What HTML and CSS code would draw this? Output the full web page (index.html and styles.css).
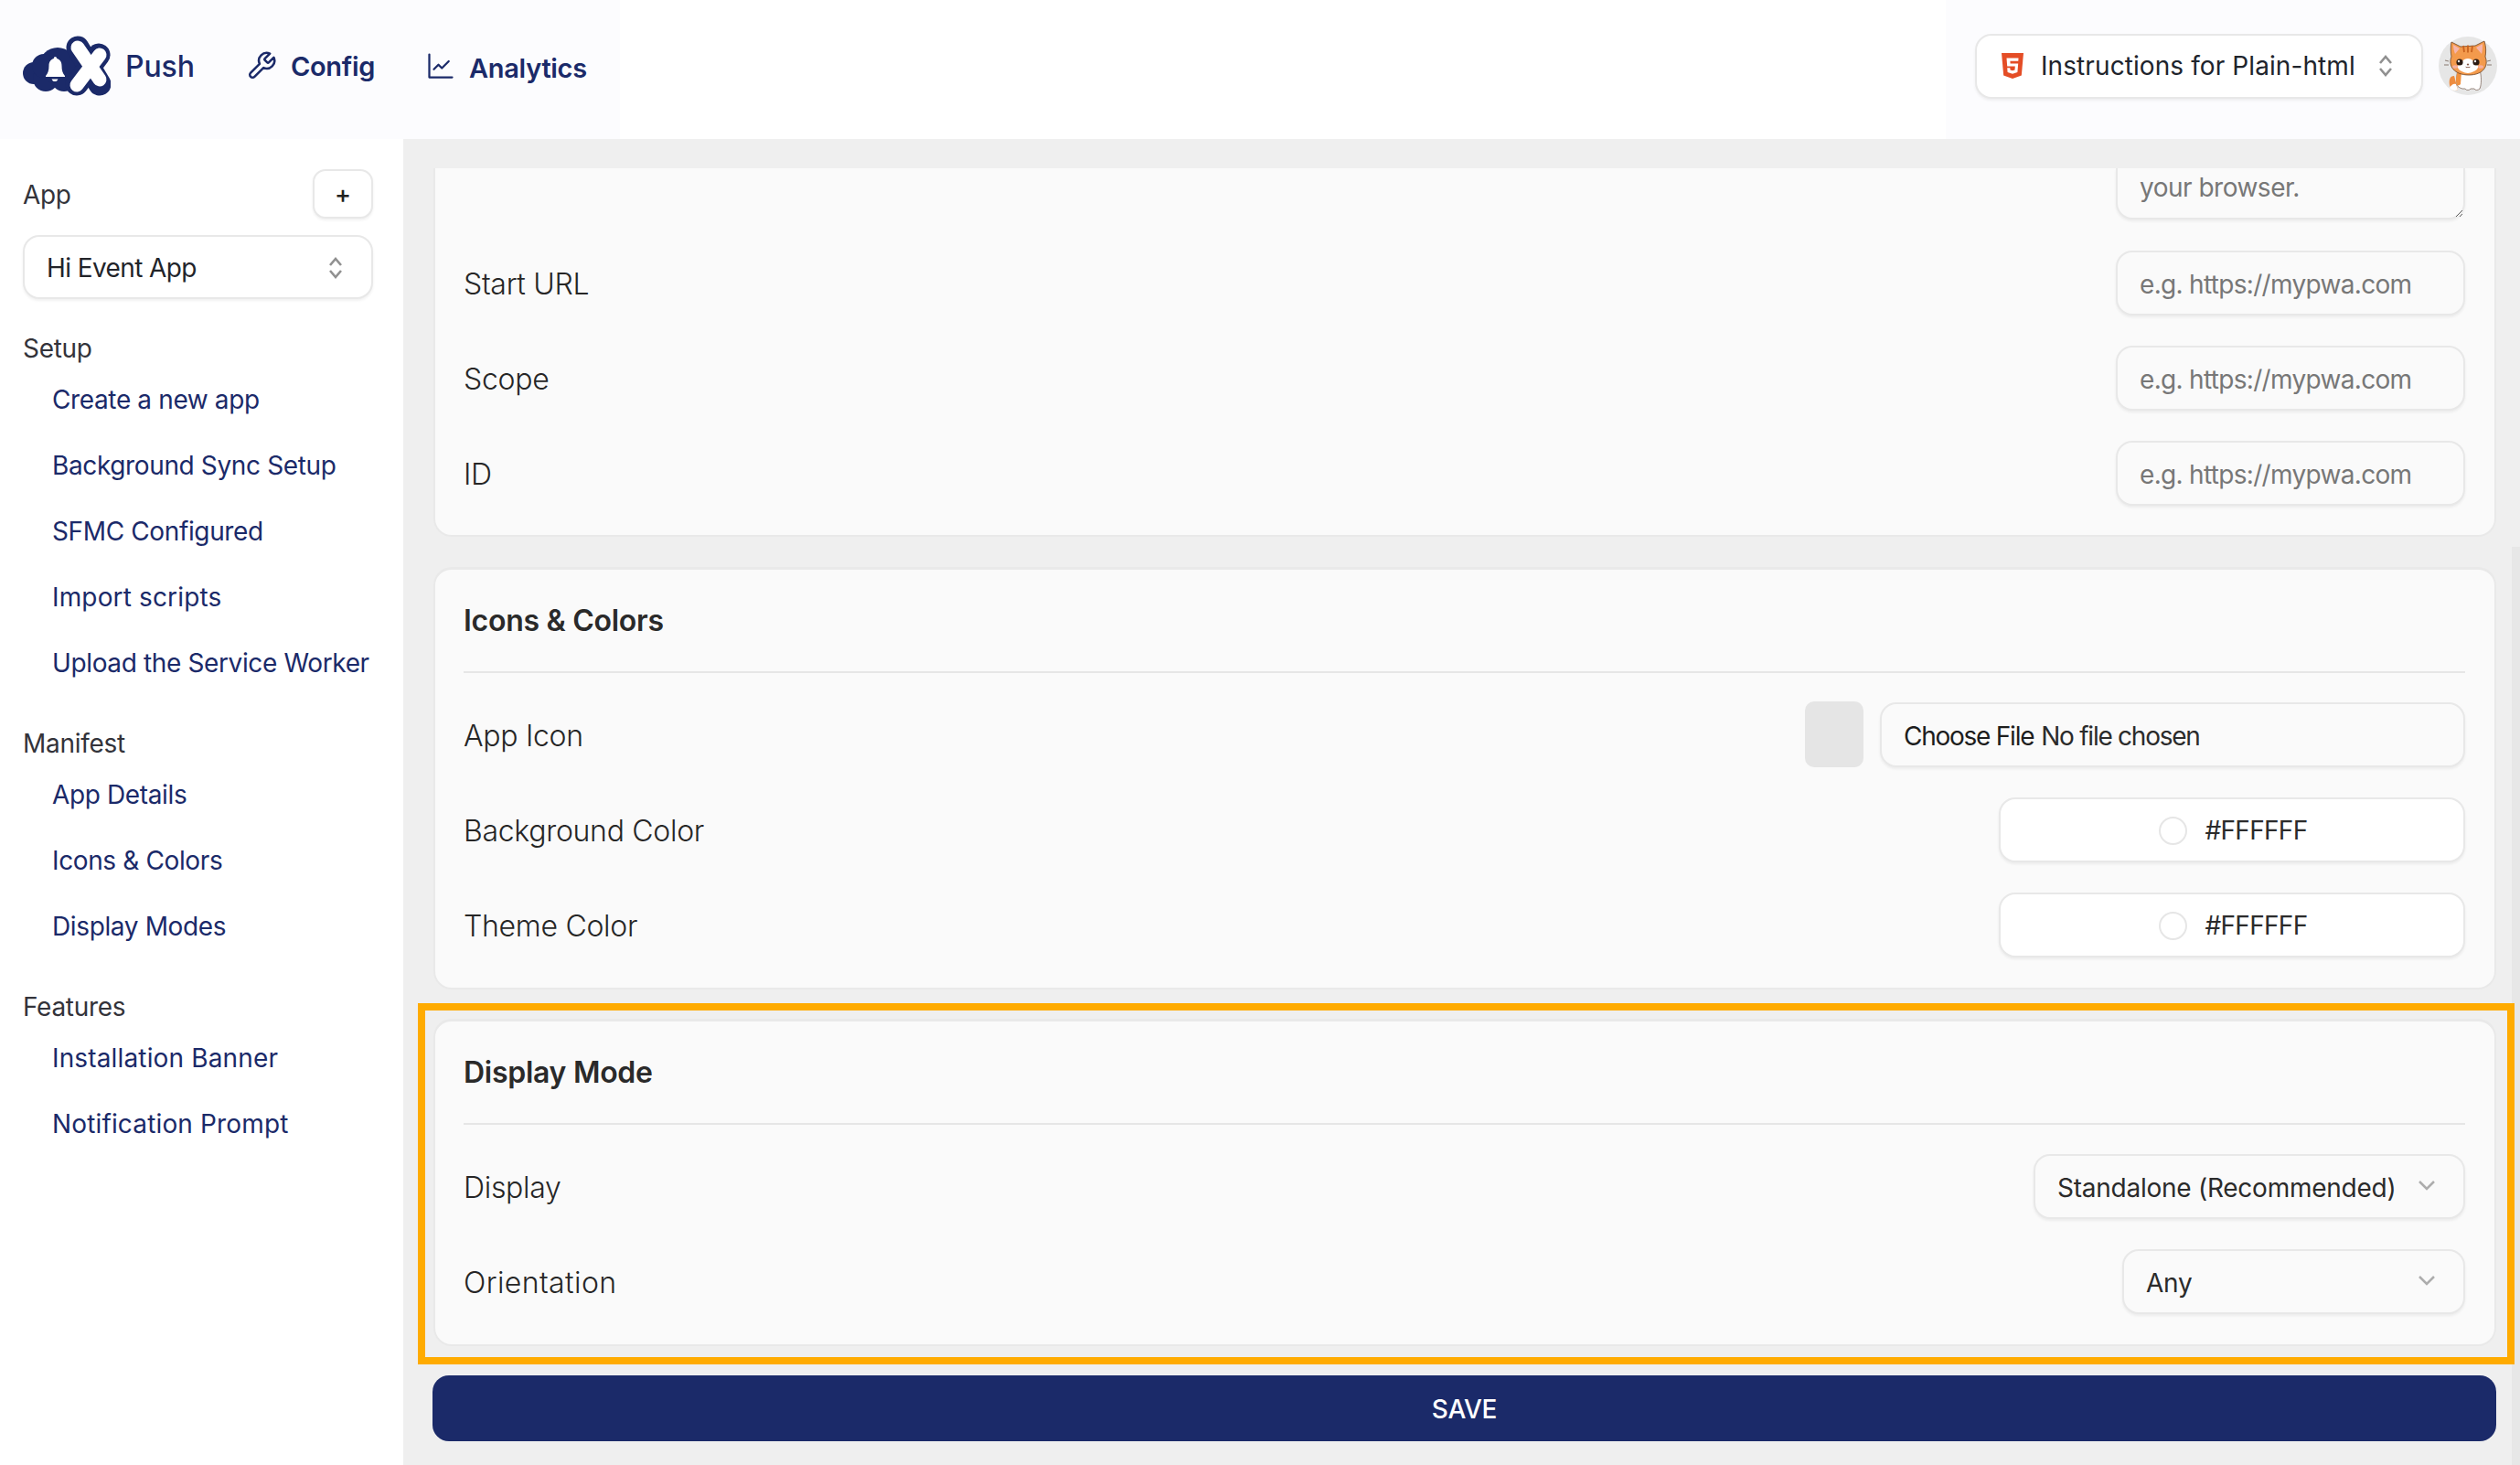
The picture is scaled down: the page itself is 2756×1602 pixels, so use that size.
FILE: index.html
```html
<!DOCTYPE html>
<html lang="en">
<head>
<meta charset="utf-8">
<title>Push – Config</title>
<link rel="stylesheet" href="styles.css">
</head>
<body>
<header class="topbar">
  <div class="topnav">
    <a class="brand">
      <svg class="logo" viewBox="25 39 96 66">
        <g fill="#1b2a69">
          <circle cx="37" cy="80" r="12"/><circle cx="50" cy="86" r="14"/><circle cx="63" cy="72" r="20"/><circle cx="48" cy="72" r="13"/><circle cx="70" cy="86" r="14"/><rect x="60" y="60" width="30" height="34"/>
        </g>
        <g fill="none" stroke-linecap="round" stroke="#1b2a69" stroke-width="25">
          <path d="M85 52 L109 92"/><path d="M108 60 L84 92"/>
        </g>
        <g fill="none" stroke-linecap="round" stroke="#fff" stroke-width="15">
          <path d="M85 52 L109 87"/><path d="M109 60 L84 93"/>
        </g>
        <path fill="#fff" d="M60 62c1.300 0 2.200.9 2.200 2.100 3.700 1 5.300 4.200 5.300 8 0 5 1 8 3.500 10.900v1H50v-1c2.500-2.900 3.500-5.900 3.500-10.900 0-3.800 1.600-7 5.300-8 0-1.200.9-2.100 1.200-2.100zM56.500 86.500h7c-.6 1.700-2 2.600-3.500 2.600s-2.900-.9-3.500-2.600z"/>
      </svg>
      <span class="brand-name">Push</span>
    </a>
    <a class="navlink config">
      <svg class="nav-icon" viewBox="0 0 24 24"><path d="M14.700 6.300a1 1 0 0 0 0 1.400l1.600 1.600a1 1 0 0 0 1.400 0l3.770-3.770a6 6 0 0 1-7.940 7.940l-6.910 6.910a2.120 2.120 0 0 1-3-3l6.910-6.910a6 6 0 0 1 7.940-7.940l-3.760 3.760z"/></svg>
      <span>Config</span>
    </a>
    <a class="navlink analytics">
      <svg class="nav-icon" viewBox="0 0 24 24"><path d="M2 2v20h20"/><path d="M6 15l4-4 3 3 6-6"/></svg>
      <span>Analytics</span>
    </a>
  </div>
  <div class="topright">
    <div class="control platform">
      <svg class="html5" viewBox="0 0 24 28"><path fill="#e44d26" d="M0 0h24l-2.200 24.500L12 28l-9.800-3.500z"/><path fill="#fff" d="M18.500 5.500h-13l.7 9h8.600l-.3 4-2.500.8-2.500-.8-.2-2.300H6.200l.4 4.800 5.400 1.700 5.400-1.700.8-9.500H9.600l-.2-2.700h8.900z"/></svg>
      <span class="platform-label">Instructions for Plain-html</span>
      <svg class="updown" viewBox="0 0 16 24"><path d="M2 9l6-7 6 7M2 15l6 7 6-7"/></svg>
    </div>
    <svg class="avatar" viewBox="0 0 64 64">
      <circle cx="32" cy="32" r="32" fill="#e6e6e6"/>
      <path d="M17 43c-5 0-6 5-5 10s6 7 9 5z" fill="#ee8c3f"/>
      <path d="M12 56c2 3 6 4 9 2l-2-6c-3-1-5 1-7 4z" fill="#fff"/>
      <path d="M21 36h24c2 8 2 16 0 21-2 2-5 2-6 0h-4c-1 2-5 2-6 0h-3c-3-1-5-2-6-4-1-6 0-12 1-17z" fill="#fff" stroke="#5c4030" stroke-width=".6"/>
      <path d="M21 38c-2 5-3 10-1 15 2 1 3 0 4-1l1-14z" fill="#f0913f"/>
      <path d="M14 6l10 5 16-1 10-5c2 6 2 12 1 17 4 10-2 20-18 20S10 32 14 22c-1-5-1-11 0-16z" fill="#f39a4c" stroke="#6b4326" stroke-width=".8"/>
      <path d="M16 9l7 4-5 6c-1-3-2-6-2-10zM48 8l-7 4 6 7c1-3 1-7 1-11z" fill="#f5b5ad"/>
      <path d="M27 10l1 7M32 9.500v8M37 10l-1 7" stroke="#c9621f" stroke-width="1.800" fill="none"/>
      <path d="M32 24c-5 0-8 5-11 8-1 2 2 7 11 8 9-1 12-6 11-8-3-3-6-8-11-8z" fill="#fff"/>
      <circle cx="23" cy="28" r="3.600" fill="#2a1a12"/><circle cx="41" cy="28" r="3.600" fill="#2a1a12"/>
      <circle cx="22" cy="27" r="1.200" fill="#fff"/><circle cx="40" cy="27" r="1.200" fill="#fff"/>
      <ellipse cx="18" cy="33" rx="3" ry="1.800" fill="#f6b0a0"/><ellipse cx="46" cy="33" rx="3" ry="1.800" fill="#f6b0a0"/>
      <path d="M31 30h2l-1 1.500zM29.500 33c1 1 2 1 2.500 0 .5 1 1.500 1 2.500 0" fill="#8a4a30" stroke="#5c3020" stroke-width=".5"/>
      <path d="M11 27l-4-1M11 31H6M53 27l4-1M53 31h5" stroke="#4a3020" stroke-width=".6" fill="none"/>
    </svg>
  </div>
</header>

<div class="shell">
  <aside class="sidebar">
    <div class="app-head">
      <span class="sb-label">App</span>
      <button class="add-btn">+</button>
    </div>
    <div class="control app-select">
      <span>Hi Event App</span>
      <svg class="updown" viewBox="0 0 16 24"><path d="M2 9l6-7 6 7M2 15l6 7 6-7"/></svg>
    </div>
    <nav class="sb-group setup">
      <div class="sb-label">Setup</div>
      <a class="sb-item">Create a new app</a>
      <a class="sb-item">Background Sync Setup</a>
      <a class="sb-item">SFMC Configured</a>
      <a class="sb-item wide">Import scripts</a>
      <a class="sb-item">Upload the Service Worker</a>
    </nav>
    <nav class="sb-group">
      <div class="sb-label">Manifest</div>
      <a class="sb-item">App Details</a>
      <a class="sb-item">Icons &amp; Colors</a>
      <a class="sb-item">Display Modes</a>
    </nav>
    <nav class="sb-group">
      <div class="sb-label">Features</div>
      <a class="sb-item wide">Installation Banner</a>
      <a class="sb-item wide">Notification Prompt</a>
    </nav>
  </aside>

  <main class="content">
    <div class="scroll-thumb"></div>
    <section class="card card-top">
      <div class="row row-textarea">
        <textarea class="field textarea" placeholder="your browser."></textarea>
      </div>
      <div class="row"><label class="row-label">Start URL</label><div class="field url ph">e.g. https://mypwa.com</div></div>
      <div class="row"><label class="row-label">Scope</label><div class="field url ph">e.g. https://mypwa.com</div></div>
      <div class="row"><label class="row-label">ID</label><div class="field url ph">e.g. https://mypwa.com</div></div>
    </section>

    <section class="card card-icons">
      <h2 class="card-title">Icons &amp; Colors</h2>
      <div class="rows">
        <div class="row">
          <label class="row-label">App Icon</label>
          <div class="file-wrap">
            <div class="swatch"></div>
            <div class="field file"><span class="file-btn">Choose File</span><span>No file chosen</span></div>
          </div>
        </div>
        <div class="row">
          <label class="row-label">Background Color</label>
          <div class="field color"><span class="dot"></span><span>#FFFFFF</span></div>
        </div>
        <div class="row">
          <label class="row-label">Theme Color</label>
          <div class="field color"><span class="dot"></span><span>#FFFFFF</span></div>
        </div>
      </div>
    </section>

    <section class="card card-display">
      <div class="highlight"></div>
      <h2 class="card-title">Display Mode</h2>
      <div class="rows">
        <div class="row">
          <label class="row-label">Display</label>
          <div class="field pick pick-display"><span>Standalone (Recommended)</span><svg class="chev" viewBox="0 0 20 12"><path d="M2 2l8 8 8-8"/></svg></div>
        </div>
        <div class="row">
          <label class="row-label wide">Orientation</label>
          <div class="field pick pick-orient"><span>Any</span><svg class="chev" viewBox="0 0 20 12"><path d="M2 2l8 8 8-8"/></svg></div>
        </div>
      </div>
    </section>

    <button class="save">SAVE</button>
  </main>
</div>
</body>
</html>
```

FILE: styles.css
```css
* { box-sizing: border-box; }
html, body { margin: 0; padding: 0; height: 100%; overflow: hidden; }
body {
  width: 2756px;
  height: 1602px;
  font-family: Inter, "Liberation Sans", sans-serif;
  background: #fff;
  color: #2b2b2b;
  display: flex;
  flex-direction: column;
}

/* top bar */
.topbar {
  height: 152px;
  flex: none;
  display: flex;
  justify-content: space-between;
  background: #fff;
}
.topnav {
  width: 678px;
  background: #fcfcfe;
  display: flex;
  align-items: center;
  padding: 0 0 8px 25px;
  color: #1b2a69;
}
.brand { display: flex; align-items: center; }
.logo { width: 96px; height: 66px; }
.brand-name { font-size: 32px; font-weight: 500; margin-left: 16px; letter-spacing: -.1px; }
.navlink { display: flex; align-items: center; font-size: 29px; font-weight: 600; letter-spacing: -.3px; }
.nav-icon { width: 30px; height: 30px; fill: none; stroke: #1b2a69; stroke-width: 1.8; stroke-linecap: round; stroke-linejoin: round; }
.config { margin-left: 56px; }
.config .nav-icon { width: 34px; height: 34px; }
.config span { margin-left: 15px; }
.analytics { margin-left: 57px; padding-top: 5px; }
.analytics span { margin-left: 16px; }
.analytics .nav-icon { margin-top: -6px; }

.topright {
  width: 628px;
  background: #fcfcfe;
  display: flex;
  align-items: center;
  padding: 0 0 8px 32px;
}
.control {
  background: #fff;
  border: 2px solid #e8e8e8;
  border-radius: 18px;
  box-shadow: 0 2px 3px rgba(0,0,0,.06);
  display: flex;
  align-items: center;
}
.platform { width: 490px; height: 71px; padding-left: 27px; font-size: 28px; letter-spacing: .09px; color: #20242c; }
.html5 { width: 24px; height: 28px; flex: none; }
.platform-label { margin-left: 19px; white-space: nowrap; }
.updown { width: 16px; height: 24px; fill: none; stroke: #909090; stroke-width: 2.600; margin-left: auto; flex: none; }
.platform .updown { margin-right: 31px; }
.avatar { width: 64px; height: 64px; margin-left: 17px; flex: none; }

/* shell */
.shell { flex: 1; display: flex; min-height: 0; }
.sidebar { width: 441px; flex: none; padding: 33px 33px 0 25px; background: #fff; }
.app-head { display: flex; justify-content: space-between; align-items: center; height: 54px; }
.app-head .sb-label { padding-top: 2px; }
.sb-label { font-size: 28px; line-height: 40px; color: #33333a; letter-spacing: -.3px; }
.add-btn {
  width: 66px; height: 54px;
  background: #fff;
  border: 2px solid #e8e8e8;
  border-radius: 14px;
  box-shadow: 0 2px 3px rgba(0,0,0,.06);
  font: 500 27px Inter, sans-serif;
  color: #222;
  padding: 0;
}
.app-select {
  margin-top: 18px;
  height: 70px;
  padding: 2px 31px 0 24px;
  font-size: 28px;
  letter-spacing: -.6px;
  color: #22242a;
}
.sb-group { margin-top: 14px; }
.sb-group.setup { margin-top: 34px; }
.sb-group .sb-label { height: 58px; }
.sb-item {
  display: block;
  height: 72px;
  line-height: 36px;
  padding-left: 32px;
  font-size: 28px;
  letter-spacing: -.37px;
  color: #1b2a69;
  white-space: nowrap;
}
.sb-item.wide { letter-spacing: .15px; }

/* content */
.content {
  flex: 1;
  min-width: 0;
  background: #efefef;
  padding: 32px 26px 0 33px;
  display: flex;
  flex-direction: column;
  position: relative;
}
.scroll-thumb {
  position: absolute;
  right: 0;
  top: 446px;
  bottom: 0;
  width: 9px;
  background: #e7e7e7;
}
.card {
  background: #fafafa;
  border: 2px solid #e9e9e9;
  border-top-width: 3px;
  border-radius: 20px;
  padding: 0 32px 0 31px;
  position: relative;
  flex: none;
}
.card-top {
  height: 403px;
  border-top: 0;
  border-radius: 0 0 20px 20px;
}
.card-icons { height: 462px; margin-top: 33px; }
.card-display { height: 358px; margin-top: 32px; }
.card-title {
  margin: 0;
  height: 113px;
  padding-top: 36px;
  font-size: 32px;
  line-height: 40px;
  font-weight: 600;
  letter-spacing: -.28px;
  color: #2a2a2a;
  border-bottom: 2px solid #e6e6e6;
}
.rows { padding-top: 15px; }
.row {
  height: 104px;
  display: flex;
  align-items: center;
  justify-content: space-between;
}
.row-label { font-size: 32px; font-weight: 300; letter-spacing: -.3px; color: #262626; padding-top: 3px; }
.row-label.wide { letter-spacing: .4px; }
.card-top .row-textarea { height: 73px; align-items: flex-start; justify-content: flex-end; }

.field {
  height: 71px;
  background: #fafafa;
  border: 2px solid #e8e8e8;
  border-radius: 18px;
  box-shadow: 0 2px 3px rgba(0,0,0,.06);
  display: flex;
  align-items: center;
  font-size: 28px;
  letter-spacing: -.25px;
  color: #2b2b2b;
  font-family: Inter, "Liberation Sans", sans-serif;
}
.url, .textarea { width: 382px; padding: 0 24px; }
.ph { color: #777; letter-spacing: -.68px; padding-top: 3px; }
.textarea {
  display: block;
  height: 56px;
  border-top: 0;
  border-radius: 0 0 18px 18px;
  outline: none;
  resize: both;
  line-height: 42px;
  letter-spacing: -.5px;
}
.textarea::placeholder { color: #777; opacity: 1; }

.file-wrap { display: flex; align-items: center; gap: 18px; }
.swatch { width: 64px; height: 72px; background: #e5e5e5; border-radius: 10px; }
.file { width: 640px; padding: 4px 24px 0; gap: 8px; letter-spacing: -1.25px; white-space: nowrap; }
.file-btn { color: #1d1d1d; }
.color { width: 510px; background: #fff; justify-content: center; gap: 19px; padding: 2px 0 0 3px; letter-spacing: -.7px; }
.dot { width: 31px; height: 31px; border-radius: 50%; border: 2px solid #e6e6e6; background: #fff; }
.pick { justify-content: space-between; padding: 3px 30px 0 24px; }
.pick-display { width: 472px; }
.pick-orient { width: 375px; }
.chev { width: 20px; height: 12px; fill: none; stroke: #adadad; stroke-width: 2.500; flex: none; margin-top: -5px; }

.highlight {
  position: absolute;
  top: -20px;
  left: -19px;
  right: -22px;
  bottom: -22px;
  border: 8px solid #ffab00;
  pointer-events: none;
}
.save {
  margin: 32px 0 0 -1px;
  height: 72px;
  width: calc(100% + 1px);
  flex: none;
  background: #1b2a69;
  color: #fff;
  border: 0;
  border-radius: 18px;
  padding-top: 2px;
  font: 500 28px Inter, sans-serif;
  letter-spacing: -.3px;
}
```
